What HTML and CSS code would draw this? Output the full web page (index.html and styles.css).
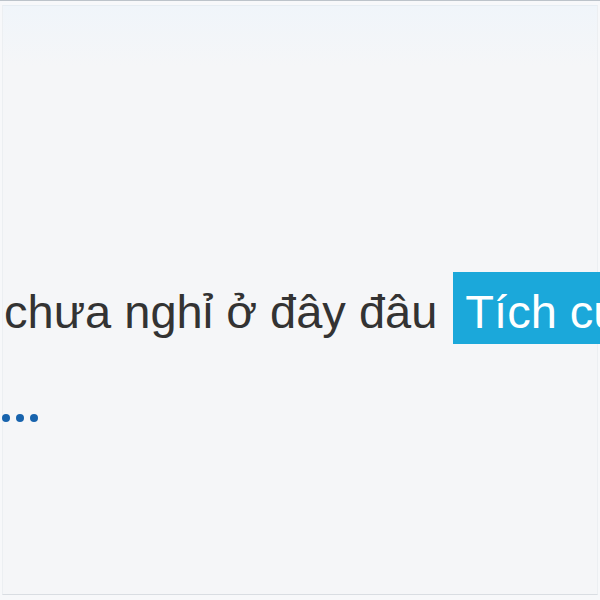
FILE: index.html
```html
<!DOCTYPE html>
<html lang="vi">
<head>
  <meta charset="UTF-8" />
  <meta name="viewport" content="width=device-width, initial-scale=1.0" />
  <title>Trạng thái</title>
  <link rel="stylesheet" href="styles.css">
</head>
<body>
<div class="frame">
  <div class="panel">
    <div class="line">
      <span class="msg">chưa nghỉ ở đây đâu</span>
      <span class="tag">Tích cực</span>
    </div>
    <div class="dots"><span></span><span></span><span></span></div>
  </div>
</div>
</body>
</html>
```

FILE: styles.css
```css
body { margin: 0; font-family: 'Liberation Sans', Arial, sans-serif; background: #f5f6f8; overflow: hidden; }
.frame { height: 600px; box-sizing: border-box; border-top: 1px solid #bcc3ca; padding: 4px 2px 0 2px; background: #f7f8fa; overflow: hidden; }
.panel { height: 590px; box-sizing: border-box; border-top: 1px solid #e6edf3; border-left: 1px solid #eceff2; border-right: 1px solid #eceff2; border-bottom: 1px solid #d9dde2; background: linear-gradient(#f0f5fa, #f5f6f8 60px); padding: 266px 0 0 1px; }
.line { display: flex; align-items: baseline; white-space: nowrap; font-size: 47px; color: #333; }
.msg { margin-right: 16px; }
.tag { display: inline-block; background: #1ba8da; color: #fff; padding: 12px 12px 5px 12px; }
.dots { display: flex; gap: 6px; margin: 70px 0 0 -2px; }
.dots span { width: 8px; height: 8px; border-radius: 50%; background: #1763ad; }
```
